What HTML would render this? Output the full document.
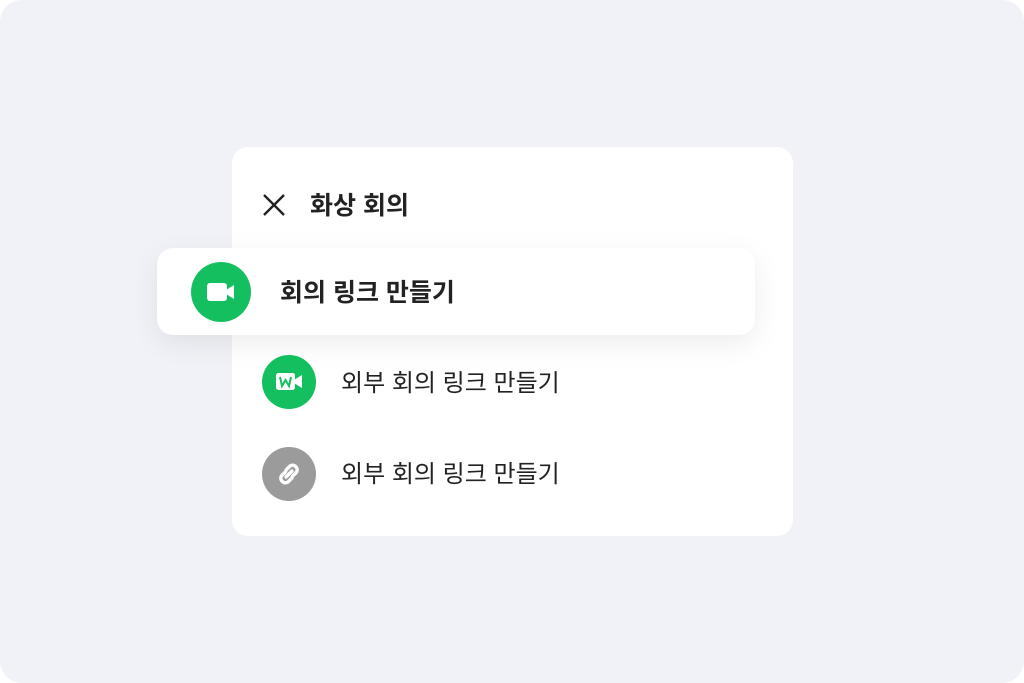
<!DOCTYPE html>
<html><head><meta charset="utf-8"><style>
html,body{margin:0;padding:0;width:1024px;height:683px;background:#fff;overflow:hidden}
body{font-family:"Liberation Sans","Noto Sans CJK KR",sans-serif;color:#222}
.bg{position:absolute;left:0;top:0;width:1024px;height:683px;background:#f1f2f7;border-radius:22px}
.card{position:absolute;left:232px;top:147px;width:561px;height:389px;background:#fff;border-radius:16px}
.hl{position:absolute;left:157px;top:248px;width:598px;height:87px;background:#fff;border-radius:16px;box-shadow:0 8px 28px rgba(0,0,0,0.08)}
.t{position:absolute;white-space:nowrap;line-height:1}
.c{position:absolute;border-radius:50%}
</style></head><body>
<div class="bg"></div>
<div class="card"></div>
<svg style="position:absolute;left:262px;top:193px" width="24" height="24"><path d="M2 2L22 22M22 2L2 22" stroke="#222" stroke-width="2.4"/></svg>
<div class="t" style="left:310px;top:194px;font-size:25px;font-weight:bold">화상 회의</div>
<div class="hl"></div>
<div class="c" style="left:191px;top:262px;width:60px;height:60px;background:#14bf5f"></div>
<svg style="position:absolute;left:207px;top:282px" width="30" height="20"><rect x="0" y="1" width="20" height="18" rx="3" fill="#fff"/><path d="M19 8L27 3V17L19 12Z" fill="#fff"/></svg>
<div class="t" style="left:280px;top:281px;font-size:25px;font-weight:bold">회의 링크 만들기</div>
<div class="c" style="left:262px;top:355px;width:54px;height:54px;background:#14bf5f"></div>
<svg style="position:absolute;left:276px;top:373px" width="28" height="18"><rect x="0" y="0" width="19" height="17" rx="2.5" fill="#fff"/><path d="M18 7L26 2V15L18 10Z" fill="#fff"/><path d="M4 4L6 13L9.5 7L13 13L15 4" stroke="#14bf5f" stroke-width="2" fill="none"/></svg>
<div class="t" style="left:341px;top:372px;font-size:24px">외부 회의 링크 만들기</div>
<div class="c" style="left:262px;top:447px;width:54px;height:54px;background:#9b9b9b"></div>
<svg style="position:absolute;left:274px;top:459px" width="30" height="30" viewBox="0 0 26 26"><g fill="none" stroke="#fff" stroke-width="3" stroke-linecap="round"><path d="M10.5 15.5L15.5 10.5"/><path d="M10 11L6.5 14.5a4 4 0 0 0 5.5 5.5L15.5 16.5"/><path d="M16 15L19.5 11.5a4 4 0 0 0-5.5-5.5L10.5 9.5"/></g></svg>
<div class="t" style="left:341px;top:463px;font-size:24px">외부 회의 링크 만들기</div>
</body></html>
